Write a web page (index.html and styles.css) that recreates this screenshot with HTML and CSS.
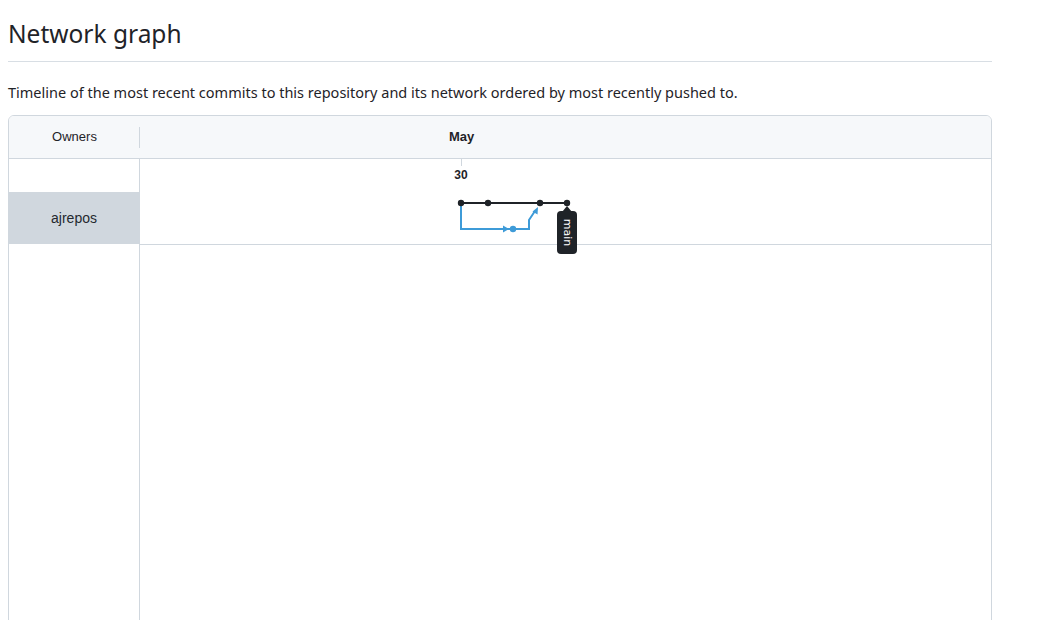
FILE: index.html
```html
<!DOCTYPE html>
<html>
<head>
<meta charset="utf-8">
<link rel="stylesheet" href="styles.css">
</head>
<body>
<div class="page">
  <h2 class="title">Network graph</h2>
  <p class="desc">Timeline of the most recent commits to this repository and its network ordered by most recently pushed to.</p>
  <div class="network">
    <div class="owners">
      <div class="owners-head"><span class="owners-label">Owners</span></div>
      <div class="owners-body">
        <div class="owner-spacer"></div>
        <div class="owner">ajrepos</div>
      </div>
    </div>
    <div class="graph">
      <div class="graph-head"><span class="month">May</span></div>
      <div class="graph-row">
        <svg class="graph-svg" width="851" height="85" viewBox="0 0 851 85">
          <line x1="321.5" y1="0" x2="321.5" y2="7" stroke="#d0d7de" stroke-width="1"/>
          <text x="321" y="20" class="day" text-anchor="middle">30</text>
          <line x1="321" y1="44" x2="427" y2="44" stroke="#1f2328" stroke-width="2"/>
          <path d="M321 44 V70 H389 V61 L395 52" fill="none" stroke="#3e9bd8" stroke-width="2"/>
          <path d="M363 66.5 L369 70 L363 73.5 Z" fill="#3e9bd8"/>
          <path d="M392.5 52.5 L398 48 L397.5 55.5 Z" fill="#3e9bd8"/>
          <circle cx="373" cy="70" r="3.2" fill="#3e9bd8"/>
          <circle cx="321" cy="44" r="3.2" fill="#1f2328"/>
          <circle cx="348" cy="44" r="3.2" fill="#1f2328"/>
          <circle cx="400" cy="44" r="3.2" fill="#1f2328"/>
          <circle cx="427" cy="44" r="3.2" fill="#1f2328"/>
          <path d="M427 47 L432 53 L422 53 Z" fill="#1f2328"/>
          <rect x="417" y="52" width="20" height="43" rx="4" fill="#1f2328"/>
          <text x="0" y="0" class="branch" transform="translate(423.5 73.5) rotate(90)" text-anchor="middle">main</text>
        </svg>
      </div>
      <div class="graph-rest"></div>
    </div>
  </div>
</div>
</body>
</html>
```

FILE: styles.css
```css
html, body {
  margin: 0;
  padding: 0;
  background: #ffffff;
}
body {
  font-family: "Noto Sans", "Open Sans", "Liberation Sans", sans-serif;
  color: #1f2328;
  overflow: hidden;
}
.page {
  width: 984px;
  padding: 16px 8px 0 8px;
}
.title {
  margin: 0;
  font-size: 24.5px;
  font-weight: 400;
  line-height: 36px;
  padding-bottom: 9px;
  border-bottom: 1px solid #d8dee4;
}
.desc {
  margin: 20px 0 13px 0;
  font-size: 14.5px;
  line-height: 20px;
}
.network {
  display: grid;
  grid-template-columns: 131px 1fr;
  border: 1px solid #d0d7de;
  border-radius: 6px;
  height: 560px;
  overflow: hidden;
  font-family: "Liberation Sans", Arial, sans-serif;
}
.owners {
  display: flex;
  flex-direction: column;
  border-right: 1px solid #d0d7de;
}
.owners-head {
  height: 40px;
  padding-bottom: 2px;
  background: #f6f8fa;
  border-bottom: 1px solid #d0d7de;
  display: flex;
  align-items: center;
  justify-content: center;
  font-size: 13px;
  position: relative;
  margin-right: -1px;
}
.owners-head::after {
  content: "";
  position: absolute;
  right: 0;
  top: 11px;
  height: 21px;
  width: 1px;
  background: #d0d7de;
}
.owners-body {
  display: flex;
  flex-direction: column;
}
.owner-spacer {
  height: 33px;
}
.owner {
  height: 52px;
  background: #d0d7de;
  display: flex;
  align-items: center;
  justify-content: center;
  font-size: 14px;
  color: #24292f;
}
.graph {
  display: flex;
  flex-direction: column;
}
.graph-head {
  height: 41px;
  padding-bottom: 1px;
  background: #f6f8fa;
  border-bottom: 1px solid #d0d7de;
  display: flex;
  align-items: center;
}
.month {
  margin-left: 309px;
  font-size: 13px;
  font-weight: 700;
}
.graph-row {
  height: 85px;
  border-bottom: 1px solid #d0d7de;
  position: relative;
  z-index: 1;
}
.graph-svg {
  display: block;
  overflow: visible;
}
.day {
  font-family: "Liberation Sans", Arial, sans-serif;
  font-size: 12px;
  font-weight: 700;
  fill: #1f2328;
}
.branch {
  font-family: "DejaVu Sans", "Liberation Sans", sans-serif;
  font-size: 11px;
  fill: #ffffff;
}
.graph-rest {
  flex: 1;
}
```
